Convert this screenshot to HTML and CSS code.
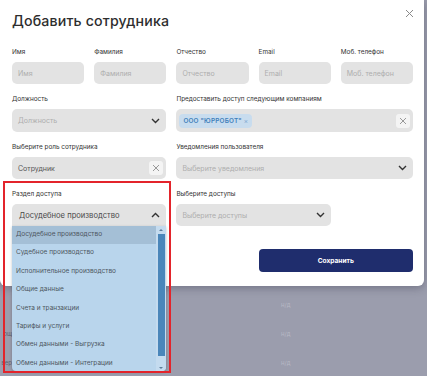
FILE: index.html
```html
<!DOCTYPE html>
<html lang="ru">
<head>
<meta charset="utf-8">
<link rel="stylesheet" href="styles.css">
</head>
<body>
<div class="page">
  <div class="bg-table">
    <div class="bg-row"><span class="bg-left"></span><span class="bg-cell">н/д</span></div>
    <div class="bg-row"><span class="bg-left">ощ</span><span class="bg-cell">н/д</span></div>
    <div class="bg-row"><span class="bg-left">вер</span><span class="bg-cell">н/д</span></div>
  </div>
</div>

<div class="modal">
  <button class="close" aria-label="Закрыть">
    <svg width="9" height="9" viewBox="0 0 9 9"><path d="M1 1L8 8M8 1L1 8" stroke="#8a8a8a" stroke-width="1"/></svg>
  </button>
  <h1 class="title">Добавить сотрудника</h1>

  <div class="grid">
    <div class="field"><div class="label">Имя</div><div class="input"><span class="ph">Имя</span></div></div>
    <div class="field"><div class="label">Фамилия</div><div class="input"><span class="ph">Фамилия</span></div></div>
    <div class="field"><div class="label">Отчество</div><div class="input"><span class="ph">Отчество</span></div></div>
    <div class="field"><div class="label">Email</div><div class="input"><span class="ph">Email</span></div></div>
    <div class="field"><div class="label">Моб. телефон</div><div class="input"><span class="ph">Моб. телефон</span></div></div>

    <div class="field span2"><div class="label">Должность</div>
      <div class="input tall"><span class="ph">Должность</span>
        <svg class="chev" width="9" height="6" viewBox="0 0 9 6"><path d="M1 1L4.5 4.5L8 1" stroke="#333" stroke-width="1.4" fill="none"/></svg>
      </div>
    </div>
    <div class="field span3"><div class="label">Предоставить доступ следующим компаниям</div>
      <div class="input tall">
        <span class="chip">ООО "ЮРРОБОТ" <span class="chip-x">×</span></span>
        <span class="clear-box"><svg width="8" height="8" viewBox="0 0 8 8"><path d="M1 1L7 7M7 1L1 7" stroke="#999" stroke-width="1"/></svg></span>
      </div>
    </div>

    <div class="field span2"><div class="label">Выберите роль сотрудника</div>
      <div class="input"><span class="val">Сотрудник</span>
        <span class="clear-box"><svg width="8" height="8" viewBox="0 0 8 8"><path d="M1 1L7 7M7 1L1 7" stroke="#999" stroke-width="1"/></svg></span>
      </div>
    </div>
    <div class="field span3"><div class="label">Уведомления пользователя</div>
      <div class="input"><span class="ph">Выберите уведомления</span>
        <svg class="chev" width="9" height="6" viewBox="0 0 9 6"><path d="M1 1L4.5 4.5L8 1" stroke="#333" stroke-width="1.4" fill="none"/></svg>
      </div>
    </div>

    <div class="field span2 open"><div class="label">Раздел доступа</div>
      <div class="input open-select"><span class="val big">Досудебное производство</span>
        <svg class="chev" width="9" height="6" viewBox="0 0 9 6"><path d="M1 5L4.5 1.5L8 5" stroke="#333" stroke-width="1.4" fill="none"/></svg>
      </div>
      <div class="dropdown">
        <ul class="options">
          <li class="active">Досудебное производство</li>
          <li>Судебное производство</li>
          <li>Исполнительное производство</li>
          <li>Общие данные</li>
          <li>Счета и транзакции</li>
          <li>Тарифы и услуги</li>
          <li>Обмен данными - Выгрузка</li>
          <li>Обмен данными - Интеграции</li>
        </ul>
        <div class="scrollbar">
          <span class="arrow up"></span>
          <span class="thumb"></span>
          <span class="arrow down"></span>
        </div>
      </div>
      <div class="highlight"></div>
    </div>
    <div class="field span2"><div class="label">Выберите доступы</div>
      <div class="input"><span class="ph">Выберите доступы</span>
        <svg class="chev" width="9" height="6" viewBox="0 0 9 6"><path d="M1 1L4.5 4.5L8 1" stroke="#333" stroke-width="1.4" fill="none"/></svg>
      </div>
    </div>

    <div class="actions">
      <button class="save">Сохранить</button>
    </div>
  </div>
</div>
</body>
</html>
```

FILE: styles.css
```css
* { box-sizing: border-box; }
html, body { margin: 0; padding: 0; }
body {
  width: 427px;
  height: 376px;
  overflow: hidden;
  background: #9b9dad;
  font-family: Inter, "Noto Sans", sans-serif;
  position: relative;
}
.page { padding-top: 301px; }
.bg-row {
  height: 29px;
  line-height: 8px;
  display: flex;
  font-size: 6px;
  color: #b7b8c4;
}
.bg-left {
  width: 12px;
  margin-right: 269px;
  color: #5e6070;
  text-align: right;
  overflow: hidden;
  white-space: nowrap;
  direction: rtl;
}

.modal {
  position: absolute;
  left: 0;
  top: 0;
  width: 424px;
  height: 286px;
  background: #fff;
  border-radius: 0 0 6px 6px;
  box-shadow: 0 2px 8px rgba(40, 40, 60, 0.35);
  padding: 12px 11px 0 12px;
}
.close {
  position: absolute;
  right: 9px;
  top: 7px;
  width: 12px;
  height: 12px;
  border: 0;
  background: none;
  padding: 0;
  display: flex;
  align-items: center;
  justify-content: center;
}
.title {
  margin: 0;
  font-size: 14.2px;
  font-weight: 500;
  color: #2e2e2e;
  line-height: 18px;
  letter-spacing: 0.15px;
}
.grid {
  margin-top: 17px;
  display: grid;
  grid-template-columns: repeat(5, 1fr);
  column-gap: 10px;
  row-gap: 10px;
}
.field { position: relative; min-width: 0; }
.span2 { grid-column: span 2; }
.span3 { grid-column: span 3; }
.label {
  font-size: 6.4px;
  color: #333;
  height: 10px;
  line-height: 10px;
  margin-bottom: 5px;
  white-space: nowrap;
}
.input {
  height: 22px;
  background: #e3e3e3;
  border-radius: 5px;
  display: flex;
  align-items: center;
  padding: 0 5px 0 6px;
  font-size: 7px;
  position: relative;
}
.input.tall { height: 23px; }
.ph { color: #aeaeae; flex: 1; white-space: nowrap; }
.val { color: #555; flex: 1; white-space: nowrap; }
.val.big { font-size: 7.6px; color: #4a4a4a; padding-left: 1px; }
.chev { flex: none; margin-right: 1px; }
.chip {
  background: #c8dcee;
  color: #3f7fbb;
  font-weight: 600;
  font-size: 6.4px;
  border-radius: 4px;
  padding: 3px 4px;
  margin-left: -3px;
  white-space: nowrap;
  letter-spacing: 0.2px;
}
.chip-x { font-weight: 400; color: #7aa6cf; }
.clear-box {
  margin-left: auto;
  width: 14px;
  height: 14px;
  border-radius: 3px;
  background: #f4f4f4;
  display: flex;
  align-items: center;
  justify-content: center;
  margin-right: -2px;
}
.open-select { border-radius: 5px 5px 0 0; }

.dropdown {
  position: absolute;
  left: 0;
  right: 0;
  top: 37px;
  height: 145px;
  background: #b9d5ec;
  border-radius: 0 0 4px 4px;
  box-shadow: 0 1px 3px rgba(0,0,0,0.25);
  overflow: hidden;
  z-index: 2;
  display: flex;
}
.options {
  list-style: none;
  margin: 0;
  padding: 0;
  flex: 1;
}
.options li {
  height: 18.4px;
  line-height: 17px;
  font-size: 6.5px;
  color: #4d5560;
  padding-left: 4px;
  white-space: nowrap;
}
.options li.active { background: #a4bfd6; }
.scrollbar {
  width: 10px;
  background: #c4dbef;
  display: flex;
  flex-direction: column;
  align-items: center;
  padding: 3px 1px 2px;
}
.thumb {
  flex: 1;
  width: 7px;
  background: #4a86ba;
  margin: 3px 0 11px;
}
.arrow { width: 0; height: 0; border-left: 2px solid transparent; border-right: 2px solid transparent; }
.arrow.up { border-bottom: 2px solid #5d7d99; }
.arrow.down { border-top: 2px solid #5d7d99; }

.highlight {
  position: absolute;
  left: -9px;
  right: -5px;
  top: -8px;
  height: 192px;
  border: 2px solid #e3242b;
  z-index: 3;
  pointer-events: none;
}

.actions {
  grid-column: 4 / span 2;
  padding-top: 13px;
}
.save {
  display: block;
  width: 100%;
  height: 23px;
  border: 0;
  border-radius: 4px;
  background: #1f2d6d;
  color: #fff;
  font-family: Inter, "Noto Sans", sans-serif;
  font-weight: 700;
  font-size: 6.6px;
}
```
